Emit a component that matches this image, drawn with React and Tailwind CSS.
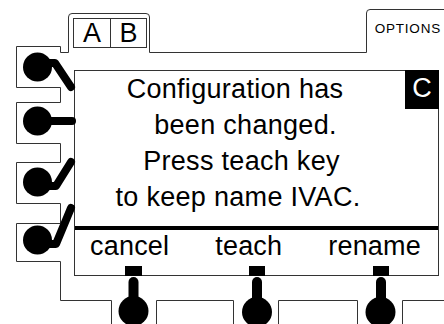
export default function App() {
  const ink = "#333333";
  return (
    <div className="relative w-[444px] h-[324px] bg-white overflow-hidden font-['Liberation_Sans',Arial,sans-serif] text-black">
      {/* top row: A|B indicator and OPTIONS label */}
      <div className="flex items-start pt-[18px] pl-[73px]">
        <div className="flex w-[74px] h-[30px] border border-[#333333]">
          <div className="w-[37px] border-r border-[#333333] text-center text-[27px] leading-[28px]">A</div>
          <div className="flex-1 text-center text-[27px] leading-[28px]">B</div>
        </div>
        <div className="ml-auto mt-[4px] pr-[3px] text-[13.5px] leading-[14px] tracking-[0.8px]">OPTIONS</div>
      </div>

      {/* screen */}
      <div className="relative ml-[74px] mt-[22px] w-[365px] h-[206px] border border-[#333333] bg-white flex flex-col">
        <div className="h-[155px] pr-[33px] text-center text-[27px] leading-[36px] tracking-[0.3px]">
          <div className="pr-[10px]">Configuration has</div>
          <div className="pl-[11px]">been changed.</div>
          <div className="pl-[3px]">Press teach key</div>
          <div className="pr-[4px]">to keep name IVAC.</div>
        </div>
        <div className="h-[4px] bg-black"></div>
        <div className="flex justify-between pl-[15px] pr-[17px] pt-[1px] text-[27px] leading-[30px] tracking-[0.2px]">
          <span>cancel</span>
          <span>teach</span>
          <span>rename</span>
        </div>
        <div className="absolute -top-px -right-px w-[34px] h-[39px] bg-black text-white flex justify-center text-[27px] leading-[36px]">
          C
        </div>
      </div>

      {/* device outline and knobs */}
      <svg
        className="absolute top-0 left-0 pointer-events-none"
        width="444"
        height="324"
        viewBox="0 0 444 324"
      >
        <g fill="none" stroke={ink} strokeWidth="1" strokeLinejoin="round">
          <path d="M60.5,52.5 L60.5,46.5 L16.5,46.5 L16.5,87.5 L60.5,87.5 L60.5,102.5 L16.5,102.5 L16.5,143.5 L60.5,143.5 L60.5,162.5 L16.5,162.5 L16.5,203.5 L60.5,203.5 L60.5,223.5 L16.5,223.5 L16.5,261.5 L60.5,261.5 L60.5,300.5 L111.5,300.5 L111.5,324" />
          <path d="M60.5,52.5 L68.5,52.5 L68.5,17 Q68.5,13.5 72,13.5 L146,13.5 Q149.5,13.5 149.5,17 L149.5,52.5 L366.5,52.5 L366.5,13 Q366.5,9.5 370,9.5 L444,9.5" />
          <path d="M156.5,324 L156.5,300.5 L233.5,300.5 L233.5,324" />
          <path d="M278.5,324 L278.5,300.5 L357.5,300.5 L357.5,324" />
          <path d="M402.5,324 L402.5,300.5 L444,300.5" />
        </g>
        <g fill="none" stroke="#000" strokeWidth="8" strokeLinecap="round" strokeLinejoin="round">
          <path d="M37,63 L55,63 L71,87" />
          <path d="M37,121 L72,121" />
          <path d="M37,186 L56,186 L71,162" />
          <path d="M37,244 L56,244 L71,208" />
        </g>
        <g fill="#000">
          <circle cx="37.5" cy="67" r="14.5" />
          <circle cx="37.5" cy="121" r="14.5" />
          <circle cx="37.5" cy="182" r="14.5" />
          <circle cx="37.5" cy="240" r="14.5" />

          <rect x="125" y="266" width="17" height="10" />
          <rect x="249" y="266" width="16" height="10" />
          <rect x="373" y="266" width="16" height="10" />
          <circle cx="133.5" cy="311" r="15" />
          <circle cx="257" cy="312" r="15" />
          <circle cx="380.5" cy="312" r="15" />
        </g>
        <g stroke="#000" strokeWidth="10" strokeLinecap="round">
          <line x1="133.5" y1="282" x2="133.5" y2="300" />
          <line x1="257" y1="282" x2="257" y2="300" />
          <line x1="381" y1="282" x2="381" y2="300" />
        </g>
      </svg>
    </div>
  );
}
